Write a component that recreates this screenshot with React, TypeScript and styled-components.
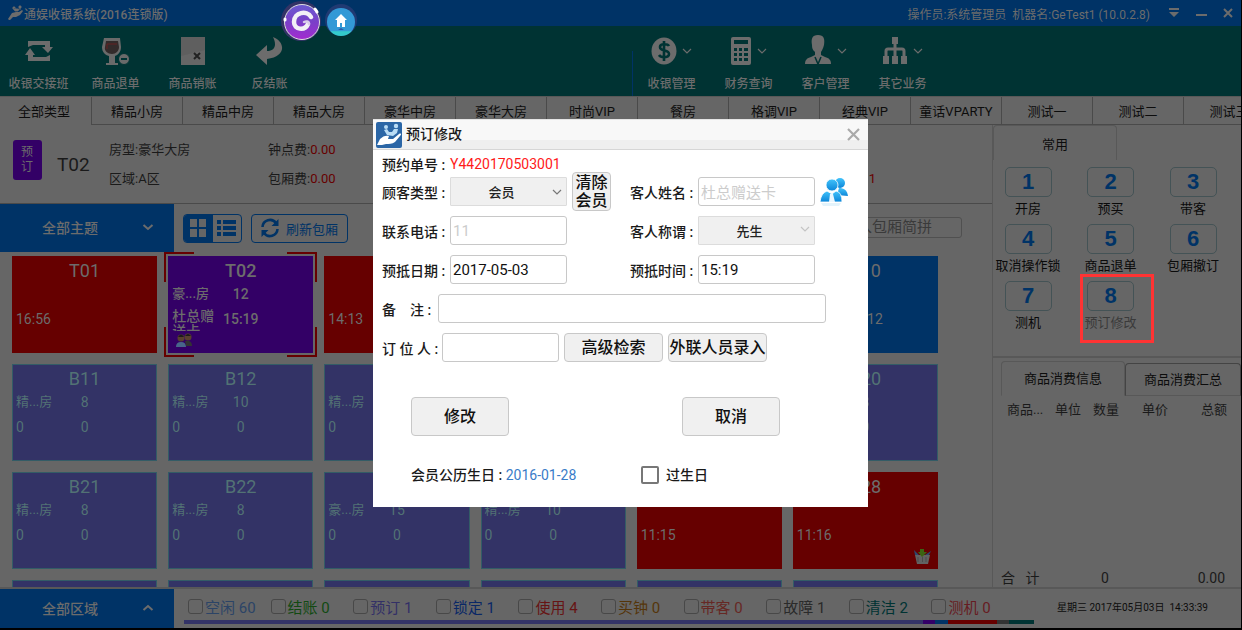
import React from "react";
import styled, { createGlobalStyle, css } from "styled-components";

const c = {
  bg: "#666666", line: "#585858", blue: "#003366", green: "#003333", red: "#660000",
  lilac: "#333366", purple: "#330066", ink: "#1a1a1a", pale: "#6c6c6c",
};

const Global = createGlobalStyle`
  * { box-sizing: border-box; }
  body { margin: 0; background: #000; font-family: Roboto, "Noto Sans CJK SC", sans-serif; font-size: 13px; color: ${c.ink}; }
  button, input, select { font-family: inherit; margin: 0; }
  button { padding: 0; }
`;

const Page = styled.div`
  position: relative; height: 100vh; min-height: 600px; overflow: hidden;
  display: flex; flex-direction: column; background: ${c.bg};
  border-right: 1px solid #000; border-bottom: 2px solid #000;
`;

const TitleBar = styled.header`
  height: 26px; flex: none; display: flex; align-items: center; padding: 0 7px 0 8px;
  background: ${c.blue}; color: ${c.pale}; font-size: 12px;
`;
const AppName = styled.h1`
  margin: 0; flex: 1; display: flex; align-items: center; font-size: 12px; font-weight: 500;
`;
const Operator = styled.span`white-space: pre; margin-right: 17px;`;
const WinButton = styled.button`
  width: 13px; height: 16px; border: 0; background: none; color: ${c.pale};
  display: flex; align-items: center; justify-content: center; margin-left: 14px;
  &:first-of-type { margin-left: 0; }
`;

const Toolbar = styled.nav`
  height: 70px; flex: none; display: flex; background: ${c.green};
`;
const ToolGroup = styled.div<{ $first?: boolean }>`
  display: flex; flex: ${p => (p.$first ? "0 0 51%" : "1")};
`;
const Separator = styled.span`
  width: 1px; margin: 25px 0 0 -1px; background: ${c.blue};
`;
const Tool = styled.button`
  width: 77px; border: 0; background: none; color: ${c.pale}; font-size: 12px; line-height: 16px;
  display: flex; flex-direction: column; align-items: center; padding-top: 9px; gap: 9px; font-weight: 500;
`;
const ToolIcon = styled.span`
  display: flex; align-items: center; gap: 5px; height: 32px;
`;

const Tabs = styled.div`
  height: 29px; flex: none; display: flex; overflow: hidden; border-top: 1px solid ${c.line};
`;
const Tab = styled.button<{ $active?: boolean }>`
  flex: 0 0 91px; border: 0; border-left: 1px solid ${p => (p.$active ? "transparent" : "#4a4a4a")};
  border-bottom: 1px solid ${p => (p.$active ? "transparent" : "#4a4a4a")};
  padding-right: ${p => (p.$active ? 4 : 0)}px;
  background: ${c.bg}; color: #0c0c0c; font-size: 13px; white-space: nowrap;
`;

const Body = styled.div`flex: 1; min-height: 0; display: flex;`;
const Left = styled.main`
  flex: 1; min-width: 0; display: flex; flex-direction: column; overflow: hidden;
`;
const Info = styled.section`
  height: 79px; flex: none; display: flex; align-items: center; padding: 0 116px 0 13px;
  border-bottom: 1px solid #4a4a4a;
`;
const Badge = styled.span`
  width: 29px; height: 40px; border-radius: 3px; background: ${c.purple}; color: ${c.pale};
  font-size: 12px; line-height: 15px; padding: 5px 8px; margin-bottom: 8px;
`;
const RoomName = styled.strong`
  font-size: 19px; font-weight: 400; margin: 1px 0 0 15px; width: 52px; line-height: 24px;
`;
const Facts = styled.div<{ $w: number }>`
  width: ${p => p.$w}px; display: grid; gap: 13px; line-height: 16px; white-space: nowrap;
`;
const Red = styled.span`color: ${c.red};`;
const Extra = styled.div`margin-left: auto; padding-top: 30px; line-height: 16px; color: ${c.red};`;

const Filters = styled.div`
  height: 48px; flex: none; display: flex; align-items: center; padding-right: 30px;
`;
const BlueDrop = styled.button`
  width: 174px; height: 100%; flex: none; border: 0; background: ${c.blue}; color: ${c.pale};
  display: flex; align-items: center; justify-content: space-between; padding: 0 20px 2px 42px;
  font-size: 14px; font-weight: 500;
`;
const Views = styled.div`
  margin-left: 9px; width: 59px; height: 29px; display: flex; border: 1px solid ${c.blue}; border-radius: 4px; overflow: hidden;
`;
const View = styled.button<{ $on?: boolean }>`
  flex: 1; border: 0; display: flex; align-items: center; justify-content: center;
  background: ${p => (p.$on ? c.blue : "transparent")}; color: ${p => (p.$on ? c.bg : c.blue)};
`;
const Refresh = styled.button`
  margin-left: 9px; width: 97px; height: 29px; border: 1px solid ${c.blue}; border-radius: 4px; background: none;
  color: ${c.blue}; font-size: 13px; display: flex; align-items: center; gap: 6px; padding: 0 0 0 8px;
`;
const Search = styled.input`
  margin: 0 0 2px auto; width: 132px; height: 21px; border: 1px solid #505050; border-radius: 3px; background: none;
  font-size: 15px; padding: 0 8px 0 11px; color: #333;
  &::placeholder { color: #3a3a3a; opacity: 1; }
`;

const Rooms = styled.div`
  flex: 1; min-height: 0; overflow: hidden; padding: 4px 54px 0 12px;
  display: grid; grid-template-columns: repeat(6, 1fr); grid-auto-rows: 97px; gap: 11px;
  align-content: start;
`;
const bracket = (x: string, y: string) =>
  `linear-gradient(${c.red}, ${c.red}) ${x} ${y} / 30px 2px no-repeat, linear-gradient(${c.red}, ${c.red}) ${x} ${y} / 2px 30px no-repeat`;
const RoomCard = styled.button<{ $bg: string; $selected?: boolean }>`
  position: relative; border: 1px solid ${p => (p.$bg === c.lilac ? "#335c66" : p.$bg)}; background: ${p => p.$bg};
  color: ${c.pale}; padding: 3px 3px 0; font-size: 14px; text-align: left;
  display: flex; flex-direction: column; justify-content: flex-start;
  ${p => p.$bg === c.lilac && css`color: #527274;`}
  ${p => p.$selected && css`
    font-weight: 500;
    &::after {
      content: ""; position: absolute; inset: -5px; pointer-events: none;
      background: ${bracket("left", "top")}, ${bracket("right", "top")}, ${bracket("left", "bottom")}, ${bracket("right", "bottom")};
    }
  `}
`;
const RoomTitle = styled.span`font-size: 18px; line-height: 22px; text-align: center; width: 100%;`;
const RoomLine = styled.span`
  display: grid; grid-template-columns: 1fr 36px 1fr; width: 100%; line-height: 16px; height: 16px; margin-top: 4px;
  & + & { margin-top: 9px; }
`;
const RoomCell = styled.span<{ $mid?: boolean; $kind?: boolean }>`
  text-align: ${p => (p.$mid ? "center" : "left")}; font-size: ${p => (p.$kind ? 13 : 14)}px; white-space: nowrap;
`;
const GuestCell = styled.span`
  font-size: 14px; line-height: 15px; height: 22px; width: 44px; overflow: hidden; margin-top: -2px;
`;
const CardIcon = styled.span<{ $right?: boolean }>`
  position: absolute; bottom: 4px; ${p => (p.$right ? "right: 6px;" : "left: 6px;")} line-height: 0;
`;

const Right = styled.aside`
  width: 249px; flex: none; display: flex; flex-direction: column; border-left: 1px solid ${c.line};
`;
const CommonTab = styled.button`
  width: 124px; height: 35px; border: 1px solid ${c.line}; border-bottom: 0; border-radius: 4px 4px 0 0;
  background: none; font-size: 13px; color: #0c0c0c; flex: none;
`;
const Actions = styled.div`
  height: 198px; flex: none; display: grid; grid-template-columns: repeat(3, 70px); grid-auto-rows: 57px;
  justify-content: space-between; padding: 7px 13px 0 0; border-bottom: 2px solid ${c.line};
`;
const Action = styled.button<{ $marked?: boolean }>`
  position: relative; border: 0; background: none; display: flex; flex-direction: column; align-items: center;
  gap: 3px; font-size: 13px; line-height: 18px; white-space: nowrap; color: ${p => (p.$marked ? "#3a3a3a" : "#0a0a0a")};
  ${p => p.$marked && css`
    &::after { content: ""; position: absolute; inset: -7px -8px -5px 4px; border: 3px solid #ff3333; }
  `}
`;
const Key = styled.b`
  width: 47px; height: 30px; border: 1px solid #445356; border-radius: 5px; color: ${c.blue};
  font: bold 22px/28px "Liberation Sans", sans-serif; text-align: center;
`;
const GoodsTabs = styled.div`display: flex; align-items: flex-end; padding: 3px 0 0 8px; flex: none;`;
const GoodsTab = styled.button<{ $active?: boolean }>`
  flex: ${p => (p.$active ? "0 0 124px" : "1")}; height: ${p => (p.$active ? 35 : 33)}px; background: none;
  border: 1px solid ${p => (p.$active ? c.line : "#444")}; border-bottom-color: ${p => (p.$active ? "transparent" : c.line)};
  border-radius: 4px 4px 0 0; font-size: 13px; color: #0c0c0c; padding-bottom: 2px;
`;
const Goods = styled.table`
  flex: none; margin: 5px 14px 0 14px; border-collapse: collapse; table-layout: fixed; width: 220px;
  th { font-weight: 400; padding: 0; line-height: 18px; text-align: left; white-space: nowrap; }
  th:last-child { text-align: right; }
`;
const Total = styled.div`
  margin-top: auto; display: grid; grid-template-columns: 100px 1fr 1fr; padding: 0 16px 0 8px; line-height: 18px; font-size: 14px; white-space: pre;
  span:last-child { text-align: right; }
`;

const Footer = styled.footer`
  height: 41px; flex: none; display: flex; border-top: 2px solid ${c.line};
`;
const States = styled.div`flex: 1; min-width: 0; padding: 6px 0 0 10px; display: flex; flex-direction: column; gap: 3px;`;
const StateList = styled.div`
  display: grid; grid-template-columns: repeat(10, 1fr); padding: 0 20px 0 4px;
`;
const State = styled.label<{ $color: string }>`
  display: flex; align-items: center; gap: 2px; height: 22px; font-size: 15px; white-space: nowrap; color: ${p => p.$color};
`;
const StateBox = styled.input`
  appearance: none; width: 15px; height: 15px; margin: 0; flex: none; border: 1px solid #484848; border-radius: 3px;
`;
const Strip = styled.div`display: flex; height: 4px;`;
const Segment = styled.span<{ $n: number; $color: string }>`flex: ${p => p.$n}; background: ${p => p.$color};`;
const Clock = styled.time`
  width: 207px; flex: none; padding-left: 23px; line-height: 37px; font-size: 10px; white-space: pre; color: #0c0c0c;
`;

const Orbs = styled.div`
  position: absolute; top: 0; left: 280px; line-height: 0;
`;

const Overlay = styled.div`
  position: absolute; inset: 0; display: flex; align-items: center; justify-content: center; padding-bottom: 2px;
`;
const Dialog = styled.section`
  width: 495px; background: #fff; color: #1a1a1a; font-size: 14px;
`;
const DialogHead = styled.header`
  height: 31px; display: flex; align-items: center; padding: 0 8px 0 3px; gap: 4px; border-bottom: 1px solid #d6d6d6;
  border-top: 1px solid #e4e4e4; background: linear-gradient(#f8f8f8 70%, #efefef 70%);
  h2 { margin: 0; flex: 1; font-size: 14px; font-weight: 500; padding-bottom: 3px; }
`;
const Close = styled.button`border: 0; background: none; line-height: 0; color: #aaa;`;
const Form = styled.form`padding: 0 10px 22px 9px; display: flex; flex-direction: column;`;
const FormRow = styled.div<{ $size?: "short" | "tall" }>`
  height: ${p => (p.$size === "tall" ? 49 : p.$size === "short" ? 27 : 29)}px; flex: none; display: flex; align-items: center;
`;
const Half = styled.div<{ $left?: boolean }>`
  display: flex; align-items: center; width: ${p => (p.$left ? "248px" : "auto")}; flex: none;
`;
const People = styled.svg`margin-left: 5px; flex: none;`;
const Label = styled.label<{ $w?: number }>`
  width: ${p => p.$w || 68}px; white-space: pre; font-weight: 500; flex: none;
`;
const fieldBox = css`
  width: 117px; height: 29px; border: 1px solid #c8c8c8; border-radius: 3px;
`;
const Field = styled.input<{ $wide?: boolean }>`
  ${fieldBox} padding: 0 2px; background: #fff; font-size: 15px; color: #111;
  ${p => p.$wide && css`width: 388px;`}
  &:disabled { color: #ccc; }
`;
const SelectWrap = styled.span`position: relative; display: flex; line-height: 0;`;
const Select = styled.select`
  ${fieldBox} appearance: none; border-color: #dcdcdc; border-radius: 1px; background: #f0f0f0; font-size: 13px; font-weight: 500;
  text-align: center; text-align-last: center; padding: 1px 16px 0 2px; color: #222; opacity: 1;
`;
const SelectMark = styled.span<{ $dim?: boolean }>`
  position: absolute; right: 5px; top: ${p => (p.$dim ? 9 : 11)}px; color: ${p => (p.$dim ? "#c4c4c4" : "#777")}; pointer-events: none;
`;
const Button = styled.button<{ $w: number; $h?: number }>`
  width: ${p => p.$w}px; height: ${p => p.$h || 29}px; border: 1px solid #c8c8c8; border-radius: 4px; background: #f0f0f0;
  font-size: 16px; line-height: 18px; font-weight: 500; color: #111; margin-left: 5px; flex: none; white-space: nowrap;
`;
const OrderNo = styled.span`color: #ff1a1a;`;
const Choices = styled.div`
  display: flex; justify-content: space-between; padding: 0 78px 0 24px; margin-top: 35px;
`;
const Birthday = styled.div`
  display: flex; align-items: center; margin-top: 29px; padding-left: 29px; line-height: 20px; font-weight: 500;
  label { display: flex; align-items: center; gap: 7px; }
`;
const BirthDate = styled.p`
  margin: 0; width: 230px; span { color: #3a7cc8; font-weight: 400; }
`;
const BirthBox = styled.input`
  appearance: none; width: 18px; height: 18px; margin: 0; border: 2px solid #777; border-radius: 2px; background: #fff;
`;

const Chevron = ({ up, size = 12 }: { up?: boolean; size?: number }) => (
  <svg width={size} height={8} viewBox="0 0 12 8" fill="none" stroke="currentColor" strokeWidth="2">
    <path d={up ? "M1.500 6 6 2l4.500 4" : "M1.500 2 6 6l4.500-4"} />
  </svg>
);
const ThinChevron = () => (
  <svg width="10" height="8" viewBox="0 0 10 8" fill="none" stroke="currentColor" strokeWidth="1.200"><path d="M1 2l4 4 4-4" /></svg>
);
const Hand = ({ size }: { size: number }) => (
  <svg width={size} height={size} viewBox="0 0 16 16" fill="currentColor">
    <path d="M0 14l4-6 4-1 3 0 3-2 1 1-3 4-4 2-3 0-3 3H1z" />
    <path d="M5 3l2 3 3 0 1-2 2 0M11 1h2v2h-2zM5 2h2v2H5z" stroke="currentColor" strokeWidth=".8" />
  </svg>
);

const icons: Record<string, React.ReactNode> = {
  swap: <svg width="30" height="24" viewBox="0 0 30 24" fill="currentColor"><path d="M4 2h22v6h3l-5 6-6-6h3V6H9L4 8zM26 22H4v-6H1l5-7 5 7H9v2h13l4-2z" /></svg>,
  wine: <svg width="30" height="30" viewBox="0 0 30 30"><path d="M3 2h16l1 9c0 5-3 8-6 9v7h3v2H5v-2h3v-7c-4-1-7-4-7-9z" fill="#6a6a6a" /><path d="M5 5h12l1 6c0 4-3 7-7 7s-8-3-7-7z" fill="#332b2b" /><path d="M6 13V8h10" stroke="#662222" fill="none" /><circle cx="23" cy="23" r="5.500" fill="#6a6a6a" stroke="#003333" /><path d="M20 23h6" stroke="#003333" strokeWidth="2" /></svg>,
  sheet: <svg width="26" height="30" viewBox="0 0 26 30"><path d="M1 1h24v28H1z" fill="#5f5f5f" /><path d="M1 20 25 14v15H1z" fill="#666" /><path d="M14 17l6 6m0-6l-6 6" stroke="#222" strokeWidth="2" /></svg>,
  back: <svg width="30" height="30" viewBox="0 0 30 30" fill="currentColor"><path d="M1 19 12 9v6c8 0 10-6 6-14 13 5 13 20-6 22v6z" /></svg>,
  dollar: <svg width="26" height="30" viewBox="0 0 26 30"><ellipse cx="13" cy="15" rx="12.500" ry="13.500" fill="#6c6c6c" /><path d="M18 10c-1-2-9-3-9 1 0 5 9 2 9 7 0 4-8 4-10 1M13 5v20" stroke="#003333" strokeWidth="2.600" fill="none" /></svg>,
  calc: <svg width="22" height="28" viewBox="0 0 22 28"><rect x="1" width="20" height="28" rx="2" fill="#6c6c6c" /><path d="M4 3h14v4H4zM4 11h3v3H4zm5 0h3v3H9zm5 0h4v3h-4zM4 16h3v3H4zm5 0h3v3H9zm5 0h4v3h-4zM4 21h3v3H4zm5 0h3v3H9zm5 0h4v3h-4z" fill="#003333" /></svg>,
  person: <svg width="28" height="32" viewBox="0 0 28 32" fill="currentColor"><path d="M14 0c6 0 7 4 6 10-1 4-2 5-3 7v3l4 2c4 1 6 3 6 7H1c0-4 2-6 6-7l4-2v-3C9 15 8 14 8 10 7 4 8 0 14 0z" /><path d="M11 22l3 7 3-7" fill="none" stroke="#003333" strokeWidth="1.500" /></svg>,
  tree: <svg width="26" height="28" viewBox="0 0 26 28"><path d="M13 4v22M4 22v-8q0-2 2-2h14q2 0 2 2v8" fill="none" stroke="#6c6c6c" strokeWidth="3" /><path d="M10 0h6v7h-6zM1 19h6v8H1zm9 0h6v8h-6zm9 0h6v8h-6z" fill="#6c6c6c" /></svg>,
};

const leftTools = [["swap", "收银交接班"], ["wine", "商品退单"], ["sheet", "商品销账"], ["back", "反结账"]];
const rightTools = [["dollar", "收银管理"], ["calc", "财务查询"], ["person", "客户管理"], ["tree", "其它业务"]];
const tabs = ["全部类型", "精品小房", "精品中房", "精品大房", "豪华中房", "豪华大房", "时尚VIP", "餐房", "格调VIP", "经典VIP", "童话VPARTY", "测试一", "测试二", "测试三"];
const actions = ["开房", "预买", "带客", "取消操作锁", "商品退单", "包厢撤订", "测机", "预订修改"];

type Room = { name: string; bg?: string; kind?: string; size?: string; a?: string; b?: string; selected?: boolean; basket?: boolean };
const rooms: Room[] = [
  { name: "T01", bg: c.red, a: "16:56" },
  { name: "T02", bg: c.purple, kind: "豪...房", size: "12", a: "杜总赠送卡", b: "15:19", selected: true },
  { name: "T03", bg: c.red, a: "14:13" },
  { name: "T05", bg: c.red }, { name: "T06", bg: c.red },
  { name: "T10", bg: c.blue, b: "14:12" },
  { name: "B11", kind: "精...房", size: "8", a: "0", b: "0" },
  { name: "B12", kind: "精...房", size: "10", a: "0", b: "0" },
  { name: "B13", kind: "精...房", size: "8", a: "0", b: "0" },
  { name: "B15" }, { name: "B16" },
  { name: "B20", kind: "精...房", size: "8", a: "0", b: "0" },
  { name: "B21", kind: "精...房", size: "8", a: "0", b: "0" },
  { name: "B22", kind: "精...房", size: "8", a: "0", b: "0" },
  { name: "B23", kind: "豪...房", size: "15", a: "0", b: "0" },
  { name: "B25", kind: "精...房", size: "10", a: "0", b: "0" },
  { name: "B26", bg: c.red, a: "11:15" },
  { name: "B28", bg: c.red, a: "11:16", basket: true },
  { name: "B30" }, { name: "B32" }, { name: "B33" }, { name: "H01" }, { name: "H02" }, { name: "B36" },
];
const states: [string, number, string, string][] = [
  ["空闲", 60, "#2c4466", c.lilac], ["结账", 0, "#124a12", "#124a12"], ["预订", 1, "#333066", c.purple], ["锁定", 1, "#0a2866", c.blue],
  ["使用", 4, "#661414", c.red], ["买钟", 0, "#55350a", "#55350a"], ["带客", 0, "#662824", "#662824"],
  ["故障", 1, "#2a2a2a", "#333333"], ["清洁", 2, c.green, c.green], ["测机", 0, "#661c22", "#661c22"],
];

const ToolButton = ({ icon, label, menu }: { icon: string; label: string; menu?: boolean }) => (
  <Tool type="button"><ToolIcon>{icons[icon]}{menu && <ThinChevron />}</ToolIcon>{label}</Tool>
);

export default function App() {
  return (
    <Page>
      <Global />
      <TitleBar>
        <AppName><Hand size={16} />通娱收银系统(2016连锁版)</AppName>
        <Operator>{"操作员:系统管理员  机器名:GeTest1 (10.0.2.8)"}</Operator>
        <WinButton type="button" aria-label="菜单"><svg width="12" height="10" fill="currentColor"><path d="M1 0h10v2H1zM1 4h10L6 9z" /></svg></WinButton>
        <WinButton type="button" aria-label="最小化"><svg width="12" height="10" fill="currentColor"><path d="M1 6h11v2H1z" /></svg></WinButton>
        <WinButton type="button" aria-label="关闭"><svg width="10" height="10" stroke="currentColor" strokeWidth="2"><path d="M1 1l8 8M9 1L1 9" /></svg></WinButton>
      </TitleBar>
      <Toolbar>
        <ToolGroup $first>{leftTools.map(([i, l]) => <ToolButton key={l} icon={i} label={l} />)}</ToolGroup>
        <Separator />
        <ToolGroup>{rightTools.map(([i, l]) => <ToolButton key={l} icon={i} label={l} menu />)}</ToolGroup>
      </Toolbar>
      <Tabs>{tabs.map((t, i) => <Tab key={t} type="button" $active={i === 0}>{t}</Tab>)}</Tabs>
      <Body>
        <Left>
          <Info>
            <Badge>预订</Badge>
            <RoomName>T02</RoomName>
            <Facts $w={159}><span>房型:豪华大房</span><span>区域:A区</span></Facts>
            <Facts $w={90}><span>钟点费:<Red>0.00</Red></span><span>包厢费:<Red>0.00</Red></span></Facts>
            <Extra>1</Extra>
          </Info>
          <Filters>
            <BlueDrop type="button">全部主题<Chevron /></BlueDrop>
            <Views>
              <View type="button" $on aria-label="网格"><svg width="16" height="18" fill="currentColor"><path d="M0 0h7v8H0zM9 0h7v8H9zM0 10h7v8H0zM9 10h7v8H9z" /></svg></View>
              <View type="button" aria-label="列表"><svg width="19" height="16" fill="currentColor"><path d="M0 0h4v4H0zM6 0h13v4H6zM0 6h4v4H0zM6 6h13v4H6zM0 12h4v4H0zM6 12h13v4H6z" /></svg></View>
            </Views>
            <Refresh type="button">
              <svg width="20" height="20" viewBox="0 0 20 20" fill="none" stroke="currentColor" strokeWidth="2.600"><path d="M2.500 9A7.500 7.500 0 0 1 16 5M17.500 11A7.500 7.500 0 0 1 4 15" /><path d="M18.500 1v7h-7zM1.500 19v-7h7z" fill="currentColor" stroke="none" /></svg>
              刷新包厢
            </Refresh>
            <Search placeholder="输入包厢简拼" aria-label="输入包厢简拼" />
          </Filters>
          <Rooms>
            {rooms.map(r => (
              <RoomCard key={r.name} type="button" $bg={r.bg || c.lilac} $selected={r.selected}>
                <RoomTitle>{r.name}</RoomTitle>
                <RoomLine><RoomCell $kind>{r.kind}</RoomCell><RoomCell $mid>{r.size}</RoomCell></RoomLine>
                <RoomLine>
                  {r.selected ? <GuestCell>{r.a}</GuestCell> : <RoomCell>{r.a}</RoomCell>}
                  <RoomCell $mid>{r.b}</RoomCell>
                </RoomLine>
                {r.selected && <CardIcon><svg width="18" height="15" viewBox="0 0 18 15"><circle cx="6" cy="5" r="3.500" fill="#59402f" /><circle cx="13" cy="4" r="3.500" fill="#59402f" /><path d="M3 4q3-5 6 0zM10 3q3-4 6 0z" fill="#1b1b1b" /><path d="M1 14q0-5 5-5t5 5z" fill="#48658a" /><path d="M10 8q7-1 7 5h-6z" fill="#333" /></svg></CardIcon>}
                {r.basket && <CardIcon $right><svg width="17" height="15" viewBox="0 0 17 15"><path d="M1 6h15l-2 9H3z" fill="#626262" /><path d="M4 8v5M8.500 8v5M12 8v5" stroke="#4c4c4c" /><path d="M0 1l5 5H1zM17 2l-6 4h4z" fill="#2c486e" /><path d="M6 0h4v3h3L8 8 4 3h2z" fill="#3c6412" /></svg></CardIcon>}
              </RoomCard>
            ))}
          </Rooms>
        </Left>
        <Right>
          <CommonTab type="button">常用</CommonTab>
          <Actions>{actions.map((a, i) => <Action key={a} type="button" $marked={i === 7}><Key>{i + 1}</Key>{a}</Action>)}</Actions>
          <GoodsTabs><GoodsTab type="button" $active>商品消费信息</GoodsTab><GoodsTab type="button">商品消费汇总</GoodsTab></GoodsTabs>
          <Goods>
            <colgroup><col width="48" /><col width="38" /><col width="49" /><col width="40" /><col /></colgroup>
            <thead><tr><th>商品...</th><th>单位</th><th>数量</th><th>单价</th><th>总额</th></tr></thead>
          </Goods>
          <Total><span>{"合   计"}</span><span>0</span><span>0.00</span></Total>
        </Right>
      </Body>
      <Footer>
        <BlueDrop type="button">全部区域<Chevron up /></BlueDrop>
        <States>
          <StateList>
            {states.map(([name, n, color]) => <State key={name} $color={color}><StateBox type="checkbox" />{name} {n}</State>)}
          </StateList>
          <Strip>{states.filter(s => s[1] > 0).map(([name, n, , bar]) => <Segment key={name} $n={n} $color={bar} />)}</Strip>
        </States>
        <Clock>{"星期三 2017年05月03日  14:33:39"}</Clock>
      </Footer>

      <Overlay>
        <Dialog role="dialog" aria-labelledby="dialog-title">
          <DialogHead>
            <svg width="26" height="26" viewBox="0 0 26 26"><rect width="26" height="26" rx="2" fill="#2b66a6" /><path d="M1 23l3-6c3-3 6-4 9-3l-1 3 5 0 6-5c2-1 3 0 1 2l-5 6c-3 2-6 2-9 2l-4 1z" fill="#fff" /><g fill="#b9dcf5"><circle cx="10" cy="5" r="2" /><circle cx="20" cy="4" r="2.200" /><path d="M8 8l3-1 2 3 3 0 2-3 4 0-1 4-4 3-6-1z" /></g></svg>
            <h2 id="dialog-title">预订修改</h2>
            <Close type="button" aria-label="关闭"><svg width="13" height="13" stroke="currentColor" strokeWidth="2.200"><path d="M1 1l11 11M12 1L1 12" /></svg></Close>
          </DialogHead>
          <Form onSubmit={e => e.preventDefault()}>
            <FormRow $size="short"><Label as="span">预约单号 :</Label><OrderNo>Y4420170503001</OrderNo></FormRow>
            <FormRow>
              <Half $left>
                <Label htmlFor="type">顾客类型 :</Label>
                <SelectWrap><Select id="type"><option>会员</option></Select><SelectMark><ThinChevron /></SelectMark></SelectWrap>
                <Button type="button" $w={39} $h={39}>清除<br />会员</Button>
              </Half>
              <Half>
                <Label htmlFor="name">客人姓名 :</Label><Field id="name" disabled defaultValue="杜总赠送卡" />
                <People width="28" height="30" viewBox="0 0 28 30">
                  <defs><linearGradient id="people" x2="0" y2="1"><stop stopColor="#42c3fb" /><stop offset="1" stopColor="#0b85d8" /></linearGradient></defs>
                  <g fill="url(#people)"><circle cx="20" cy="6" r="5" /><path d="M17 18l2-7c5 0 8 2 9 8z" /></g>
                  <g fill="url(#people)" stroke="#fff" strokeWidth=".8"><circle cx="12" cy="8" r="6" /><path d="M0 25q1-9 7-11l5 3 4-3q6 1 6 11z" /></g>
                  <path d="M10 17h3l2 8H9z" fill="#eaf7ff" />
                  <path d="M1 26h20l-2 3H3z" fill="#e3f3fb" />
                </People>
              </Half>
            </FormRow>
            <FormRow $size="tall">
              <Half $left><Label htmlFor="phone">联系电话 :</Label><Field id="phone" disabled defaultValue="11" /></Half>
              <Half>
                <Label htmlFor="call">客人称谓 :</Label>
                <SelectWrap><Select id="call" disabled><option>先生</option></Select><SelectMark $dim><ThinChevron /></SelectMark></SelectWrap>
              </Half>
            </FormRow>
            <FormRow>
              <Half $left><Label htmlFor="date">预抵日期 :</Label><Field id="date" defaultValue="2017-05-03" /></Half>
              <Half><Label htmlFor="time">预抵时间 :</Label><Field id="time" defaultValue="15:19" /></Half>
            </FormRow>
            <FormRow $size="tall"><Label $w={56} htmlFor="note">{"备    注 :"}</Label><Field id="note" $wide /></FormRow>
            <FormRow>
              <Label $w={60} htmlFor="booker">{"订 位 人 :"}</Label><Field id="booker" />
              <Button type="button" $w={99}>高级检索</Button><Button type="button" $w={99}>外联人员录入</Button>
            </FormRow>
            <Choices><Button type="submit" $w={98} $h={39}>修改</Button><Button type="button" $w={98} $h={39}>取消</Button></Choices>
            <Birthday>
              <BirthDate>会员公历生日 : <span>2016-01-28</span></BirthDate>
              <label><BirthBox type="checkbox" />过生日</label>
            </Birthday>
          </Form>
        </Dialog>
      </Overlay>
      <Orbs>
        <svg width="80" height="44" viewBox="0 0 80 44">
          <defs>
            <linearGradient id="violet" x2="0" y2="1"><stop stopColor="#6a5bd0" /><stop offset=".5" stopColor="#7a3fc8" /><stop offset="1" stopColor="#a32bd0" /></linearGradient>
            <linearGradient id="sky" x2="0" y2="1"><stop offset=".8" stopColor="#3399d6" /><stop offset=".85" stopColor="#33cccc" /></linearGradient>
          </defs>
          <circle cx="21" cy="21" r="20" fill="#333366" />
          <circle cx="22" cy="22" r="17.500" fill="url(#violet)" stroke="#ddd" />
          <path d="M35 9q1 1 2 3M5 19v1" stroke="#fff" strokeWidth="3" strokeLinecap="round" />
          <path d="M31 17C27 10 14 12 14 22c0 8 11 9 14 2" stroke="#f2f0f6" strokeWidth="4.500" strokeLinecap="round" fill="none" />
          <path d="M29 24c0-3-3-3-5-2" stroke="#d9cdea" strokeWidth="2.500" strokeLinecap="round" fill="none" />
          <circle cx="61" cy="20" r="16" fill="#203a72" />
          <circle cx="61" cy="22" r="14" fill="url(#sky)" />
          <path d="M61 14l6 6h-2v7h-3v-4h-2v4h-3v-7h-2z" fill="#fff" />
          <path d="M58 30l3-2 3 2z" fill="#2a5ca8" />
        </svg>
      </Orbs>
    </Page>
  );
}
